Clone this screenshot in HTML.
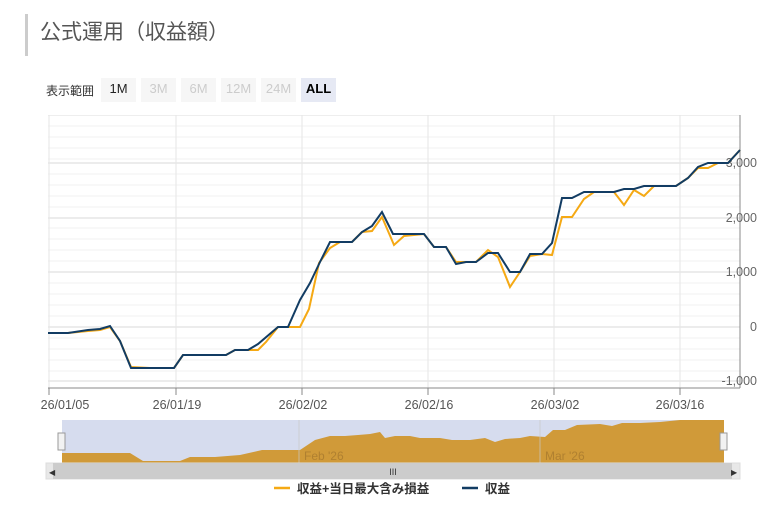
<!DOCTYPE html>
<html><head><meta charset="utf-8"><style>
body{margin:0;width:783px;height:508px;background:#fff;font-family:"Liberation Sans","Noto Sans CJK JP",sans-serif;overflow:hidden;position:relative}
.title{position:absolute;left:25px;top:14px;height:42px;border-left:3px solid #ccc;padding-left:12px;font-size:21px;color:#555;line-height:38px}
.rng{position:absolute;left:46px;top:78px;font-size:12px;color:#333;display:flex;align-items:center}
.rng span.b{display:inline-block;width:35px;height:24px;line-height:22px;text-align:center;background:#f6f6f6;color:#ccc;margin-left:5px;font-size:13px}
</style></head><body>
<div class="title">公式運用（収益額）</div>
<div class="rng">表示範囲<span class="b" style="color:#222;margin-left:7px">1M</span><span class="b">3M</span><span class="b">6M</span><span class="b">12M</span><span class="b">24M</span><span class="b" style="background:#e6e9f4;color:#000;font-weight:bold">ALL</span></div>
<svg width="783" height="508" style="position:absolute;left:0;top:0" font-family="Liberation Sans, sans-serif">
<rect x="48" y="115" width="692" height="1" fill="#eee"/>
<g stroke="#f0f0f0" stroke-width="1">
<line x1="48" x2="740" y1="126" y2="126"/><line x1="48" x2="740" y1="137" y2="137"/><line x1="48" x2="740" y1="148" y2="148"/><line x1="48" x2="740" y1="159" y2="159"/><line x1="48" x2="740" y1="174" y2="174"/><line x1="48" x2="740" y1="185" y2="185"/><line x1="48" x2="740" y1="196" y2="196"/><line x1="48" x2="740" y1="207" y2="207"/><line x1="48" x2="740" y1="228" y2="228"/><line x1="48" x2="740" y1="239" y2="239"/><line x1="48" x2="740" y1="250" y2="250"/><line x1="48" x2="740" y1="261" y2="261"/><line x1="48" x2="740" y1="283" y2="283"/><line x1="48" x2="740" y1="294" y2="294"/><line x1="48" x2="740" y1="305" y2="305"/><line x1="48" x2="740" y1="316" y2="316"/><line x1="48" x2="740" y1="338" y2="338"/><line x1="48" x2="740" y1="349" y2="349"/><line x1="48" x2="740" y1="360" y2="360"/><line x1="48" x2="740" y1="371" y2="371"/>
</g>
<g stroke="#e6e6e6" stroke-width="1.5">
<line x1="48" x2="740" y1="163" y2="163"/><line x1="48" x2="740" y1="218" y2="218"/><line x1="48" x2="740" y1="272" y2="272"/><line x1="48" x2="740" y1="327" y2="327"/><line x1="48" x2="740" y1="381" y2="381"/>
</g>
<g stroke="#e6e6e6"><line x1="49" x2="49" y1="115" y2="388"/><line x1="176" x2="176" y1="115" y2="388"/><line x1="302" x2="302" y1="115" y2="388"/><line x1="428" x2="428" y1="115" y2="388"/><line x1="554" x2="554" y1="115" y2="388"/><line x1="680" x2="680" y1="115" y2="388"/></g>
<line x1="740" x2="740" y1="115" y2="388" stroke="#888"/>
<line x1="48" x2="740" y1="388" y2="388" stroke="#888"/>
<g stroke="#888"><line x1="49" x2="49" y1="388" y2="395"/><line x1="176" x2="176" y1="388" y2="395"/><line x1="302" x2="302" y1="388" y2="395"/><line x1="428" x2="428" y1="388" y2="395"/><line x1="554" x2="554" y1="388" y2="395"/><line x1="680" x2="680" y1="388" y2="395"/></g>
<g font-size="12.5" fill="#666" text-anchor="end"><text x="757" y="167">3,000</text><text x="757" y="222">2,000</text><text x="757" y="276">1,000</text><text x="757" y="331">0</text><text x="757" y="385">-1,000</text></g>
<g font-size="12.5" fill="#555" text-anchor="middle"><text x="65" y="409">26/01/05</text><text x="177" y="409">26/01/19</text><text x="303" y="409">26/02/02</text><text x="429" y="409">26/02/16</text><text x="555" y="409">26/03/02</text><text x="680" y="409">26/03/16</text></g>
<polyline fill="none" stroke="#f5a914" stroke-width="2" points="48,333 68,333 88,331 100,330 110,327 120,341 131,367 150,368 174,368 183,355 226,355 235,350 248,350 258,350 266,342 278,327 300,327 309,309 319,263 330,248 340,242 352,242 362,232 372,231 382,217 394,245 404,236 424,234 434,247 446,247 456,262 466,262 476,262 488,250 498,257 510,287 520,272 530,256 542,254 552,255 562,217 572,217 584,199 594,192 614,192 624,205 634,190 644,196 654,186 676,186 688,178 698,168 708,168 718,163 728,163 740,150"/>
<polyline fill="none" stroke="#123c63" stroke-width="2" points="48,333 68,333 88,330 100,329 110,326 120,341 131,368 150,368 174,368 183,355 226,355 235,350 248,350 258,344 278,327 288,327 300,300 310,283 320,262 330,242 352,242 362,232 372,226 382,212 393,234 424,234 434,247 446,247 456,264 466,262 476,262 488,253 498,253 510,272 520,272 530,254 542,254 552,243 562,198 572,198 584,192 614,192 624,189 634,189 644,186 676,186 688,178 698,167 708,163 728,163 740,150"/>
<rect x="62" y="420" width="662" height="43" fill="#d6dcee"/>
<polygon fill="#d09a39" points="62,463 62,453 96,453 130,453 143,461 180,461 190,457 215,457 240,455 262,450 300,450 315,440 330,436 345,436 358,435 370,434 380,432 385,438 395,436 410,436 420,438 440,438 452,440 470,440 485,438 495,442 505,439 520,438 530,436 545,437 553,430 565,430 577,425 600,424 612,426 622,423 640,423 660,422 680,420 724,420 724,463"/>
<line x1="299" x2="299" y1="420" y2="463" stroke="#c8c8c8" stroke-width=".7"/><line x1="540" x2="540" y1="420" y2="463" stroke="#c8c8c8" stroke-width=".7"/>
<text x="304" y="460" font-size="12" fill="#b08030">Feb '26</text><text x="545" y="460" font-size="12" fill="#b08030">Mar '26</text>
<rect x="58" y="433" width="7" height="17" fill="#f2f2f2" stroke="#999"/><rect x="720" y="433" width="7" height="17" fill="#f2f2f2" stroke="#999"/>
<rect x="46" y="463" width="694" height="16" fill="#e8e8e8" stroke="#ddd"/>
<rect x="53" y="463" width="679" height="16" fill="#ccc"/>
<text x="49" y="475" font-size="8" fill="#333">◀</text><text x="731" y="475" font-size="8" fill="#333">▶</text>
<text x="393" y="475" font-size="9" fill="#333" text-anchor="middle">III</text>
<line x1="274" x2="290" y1="488" y2="488" stroke="#f5a914" stroke-width="2.5"/>
<text x="297" y="493" font-size="12.5" font-weight="bold" fill="#333" font-family="Liberation Sans, Noto Sans CJK JP, sans-serif">収益+当日最大含み損益</text>
<line x1="462" x2="478" y1="488" y2="488" stroke="#123c63" stroke-width="2.5"/>
<text x="485" y="493" font-size="12.5" font-weight="bold" fill="#333" font-family="Liberation Sans, Noto Sans CJK JP, sans-serif">収益</text>
</svg>
</body></html>
